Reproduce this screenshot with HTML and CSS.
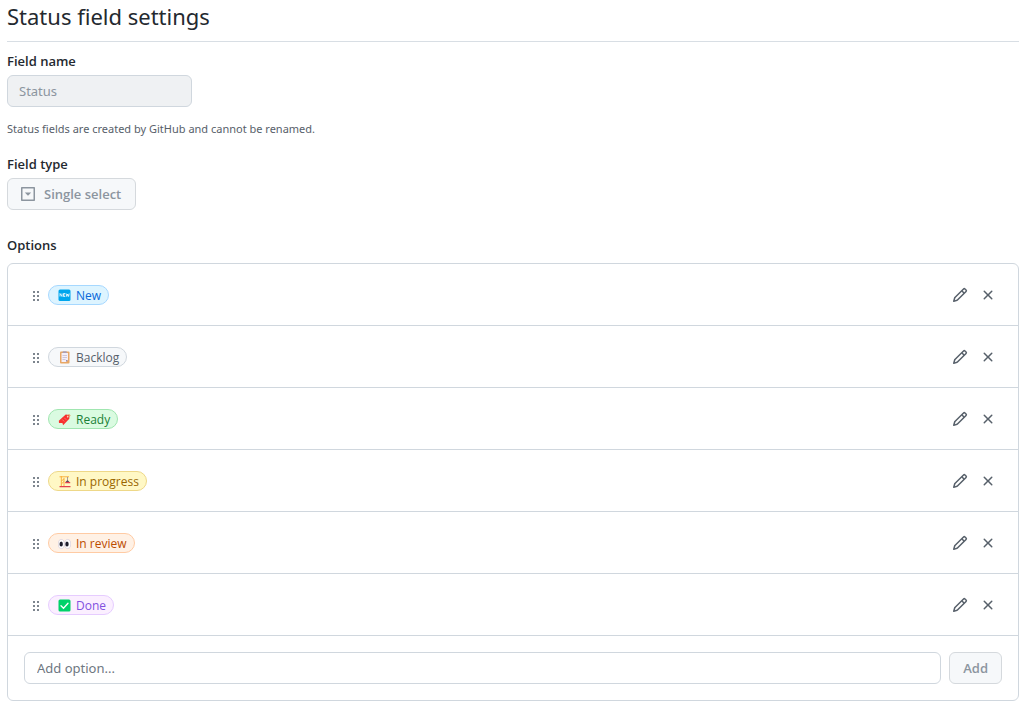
FILE: index.html
```html
<!DOCTYPE html>
<html lang="en">
<head>
<meta charset="utf-8">
<meta name="viewport" content="width=device-width, initial-scale=1">
<title>Status field settings</title>
<link rel="stylesheet" href="styles.css">
</head>
<body>
<svg class="defs" aria-hidden="true">
  <symbol id="pencil" viewBox="0 0 16 16"><path d="M11.013 1.427a1.75 1.75 0 0 1 2.474 0l1.086 1.086a1.75 1.75 0 0 1 0 2.474l-8.61 8.61c-.21.21-.47.364-.756.445l-3.251.93a.75.75 0 0 1-.927-.928l.929-3.25c.081-.286.235-.547.445-.758l8.61-8.61Zm.176 4.823L9.75 4.81l-6.286 6.287a.253.253 0 0 0-.064.108l-.558 1.953 1.953-.558a.253.253 0 0 0 .108-.064Zm1.238-3.763a.25.25 0 0 0-.354 0L10.811 3.75l1.439 1.44 1.263-1.263a.25.25 0 0 0 0-.354Z"/></symbol>
  <symbol id="cross" viewBox="0 0 16 16"><path d="M3.72 3.72a.75.75 0 0 1 1.06 0L8 6.94l3.22-3.22a.75.75 0 1 1 1.06 1.06L9.06 8l3.22 3.22a.75.75 0 1 1-1.06 1.06L8 9.06l-3.22 3.22a.75.75 0 0 1-1.06-1.06L6.94 8 3.72 4.78a.75.75 0 0 1 0-1.06Z"/></symbol>
  <symbol id="grip" viewBox="0 0 16 16"><path d="M5 4h2v2H5zM9 4h2v2H9zM5 8h2v2H5zM9 8h2v2H9zM5 12h2v2H5zM9 12h2v2H9z"/></symbol>
</svg>
<main class="page">
  <h1 class="title">Status field settings</h1>

  <section class="field">
    <label class="label" for="field-name">Field name</label>
    <input class="input name-input" id="field-name" type="text" value="Status" disabled>
    <p class="note">Status fields are created by GitHub and cannot be renamed.</p>
  </section>

  <section class="field type-field">
    <label class="label" for="field-type">Field type</label>
    <button class="button type-button" id="field-type" type="button" disabled>
      <svg class="icon" viewBox="0 0 16 16" aria-hidden="true"><path fill-rule="evenodd" d="M1.75 1h12.5c.42 0 .75.33.75.75v12.5c0 .42-.33.75-.75.75H1.750A.75.75 0 0 1 1 14.250V1.750C1 1.330 1.330 1 1.750 1ZM2.500 2.500v11h11v-11Z"/><path d="M4.800 6.500h6.400L8 9.700Z"/></svg>
      Single select
    </button>
  </section>

  <section>
    <h2 class="label" id="options-title">Options</h2>
    <div class="box">
      <ul class="options" aria-labelledby="options-title">
        <li class="option">
          <svg class="grip" aria-hidden="true"><use href="#grip"/></svg>
          <span class="tag blue"><svg class="emoji" viewBox="0 0 13 13" aria-hidden="true"><rect x=".5" y=".5" width="12" height="11.500" rx="1.500" fill="#00a6ed"/><path d="M2 7.500v-3l2 3v-3M7.300 4.500H5.500v3h1.800M5.500 6h1.600M8.200 4.500l.6 3 .9-2.500.9 2.500.6-3" fill="none" stroke="#fff" stroke-width=".8"/></svg>New</span>
          <button class="action" type="button" aria-label="Edit New"><svg class="icon"><use href="#pencil"/></svg></button>
          <button class="action" type="button" aria-label="Remove New"><svg class="icon"><use href="#cross"/></svg></button>
        </li>
        <li class="option">
          <svg class="grip" aria-hidden="true"><use href="#grip"/></svg>
          <span class="tag gray"><svg class="emoji" viewBox="0 0 13 13" aria-hidden="true"><rect x="2" y=".5" width="9.500" height="12" rx="1" fill="#e8a765"/><path d="M3.500 2h6.500v7L8 11H3.500Z" fill="#f3eef8"/><path d="M8 11V9h2Z" fill="#9b8fad"/><path d="M4.500 4.500h4.500M4.500 6.500h4.500M4.500 8.500h3" stroke="#c4bbd0" stroke-width=".8"/><path d="M4.700.3h4v1.700h-4Z" fill="#a99db5"/></svg>Backlog</span>
          <button class="action" type="button" aria-label="Edit Backlog"><svg class="icon"><use href="#pencil"/></svg></button>
          <button class="action" type="button" aria-label="Remove Backlog"><svg class="icon"><use href="#cross"/></svg></button>
        </li>
        <li class="option">
          <svg class="grip" aria-hidden="true"><use href="#grip"/></svg>
          <span class="tag green"><svg class="emoji" viewBox="0 0 13 13" aria-hidden="true"><path d="M.8 7.800 7.700 1.600l3.800.5-.2 3.600-6.200 6.600-.7-2.300L1 10Z" fill="#f8312f"/><path d="m4.300 6.500 2 2M6.300 4.800l2 2" stroke="#ff9a95" stroke-width=".6"/><circle cx="9.700" cy="3.700" r=".8" fill="#fff"/><path d="M9.500 3.400c.2-1.800 2-2.500 2.500-1.200.4 1-.8 1.800-1.500 1.300" fill="none" stroke="#e39d5b" stroke-width=".8"/></svg>Ready</span>
          <button class="action" type="button" aria-label="Edit Ready"><svg class="icon"><use href="#pencil"/></svg></button>
          <button class="action" type="button" aria-label="Remove Ready"><svg class="icon"><use href="#cross"/></svg></button>
        </li>
        <li class="option">
          <svg class="grip" aria-hidden="true"><use href="#grip"/></svg>
          <span class="tag yellow"><svg class="emoji" viewBox="0 0 13 13" aria-hidden="true"><path d="M3.300 11V1M6 11V3M1.500 1.800h9.500M3.300 6 6 4M3.300 9 6 6.500" fill="none" stroke="#f9b13c"/><path d="M9.500 2v3.500" stroke="#8a7486" stroke-width=".7"/><path d="m7.500 7 2-2 2 2Z" fill="#5a4358"/><path d="M7.200 7h5v1.200h-5ZM1.500 11h11v1.200h-11Z" fill="#e4404f"/></svg>In progress</span>
          <button class="action" type="button" aria-label="Edit In progress"><svg class="icon"><use href="#pencil"/></svg></button>
          <button class="action" type="button" aria-label="Remove In progress"><svg class="icon"><use href="#cross"/></svg></button>
        </li>
        <li class="option">
          <svg class="grip" aria-hidden="true"><use href="#grip"/></svg>
          <span class="tag orange"><svg class="emoji" viewBox="0 0 13 13" aria-hidden="true"><ellipse cx="3.300" cy="7" rx="3" ry="4.500" fill="#fff" stroke="#cdc4d6" stroke-width=".6"/><ellipse cx="9.700" cy="7" rx="3" ry="4.500" fill="#fff" stroke="#cdc4d6" stroke-width=".6"/><ellipse cx="3.200" cy="7" rx="1.700" ry="2.500" fill="#1c1c2b"/><ellipse cx="9" cy="7" rx="1.700" ry="2.500" fill="#1c1c2b"/></svg>In review</span>
          <button class="action" type="button" aria-label="Edit In review"><svg class="icon"><use href="#pencil"/></svg></button>
          <button class="action" type="button" aria-label="Remove In review"><svg class="icon"><use href="#cross"/></svg></button>
        </li>
        <li class="option">
          <svg class="grip" aria-hidden="true"><use href="#grip"/></svg>
          <span class="tag purple"><svg class="emoji" viewBox="0 0 13 13" aria-hidden="true"><rect x=".5" y=".5" width="12" height="12" rx="1.500" fill="#00d26a"/><path d="m3 6.700 2.500 2.500L10 4.300" fill="none" stroke="#fff" stroke-width="1.300" stroke-linecap="round"/></svg>Done</span>
          <button class="action" type="button" aria-label="Edit Done"><svg class="icon"><use href="#pencil"/></svg></button>
          <button class="action" type="button" aria-label="Remove Done"><svg class="icon"><use href="#cross"/></svg></button>
        </li>
      </ul>
      <form class="add-row">
        <input class="input add-input" type="text" placeholder="Add option..." aria-label="Add option">
        <button class="button" type="submit" disabled>Add</button>
      </form>
    </div>
  </section>
</main>
</body>
</html>
```
FILE: styles.css
```css
* {
  box-sizing: border-box;
}

body {
  margin: 0;
  background: #fff;
  color: #24292f;
  font-family: "Segoe UI", "Open Sans", "Noto Sans", sans-serif;
  font-size: 13px;
  line-height: 20px;
}

.defs {
  display: none;
}

.page {
  padding: 0 1px 7px 7px;
}

.title {
  margin: 0 0 9px;
  padding-bottom: 8px;
  border-bottom: 1px solid #d8dee4;
  font-family: "Segoe UI", "Noto Sans", sans-serif;
  font-size: 22px;
  font-weight: 400;
  line-height: 33px;
}

.field {
  display: flex;
  flex-direction: column;
  align-items: flex-start;
  margin-bottom: 15px;
}

.type-field {
  margin-bottom: 25px;
}

.label {
  display: block;
  margin: 0 0 4px;
  font-size: 13px;
  font-weight: 600;
  line-height: 20px;
}

.input {
  height: 32px;
  padding: 0 12px;
  border: 1px solid #d0d7de;
  border-radius: 6px;
  background: #fff;
  color: #24292f;
  font-family: "Segoe UI", "Noto Sans", sans-serif;
  font-size: 13px;
}

.input::placeholder {
  color: #6e7781;
  opacity: 1;
}

.name-input {
  width: 185px;
  padding: 0 11px;
}

.name-input:disabled {
  background: #eff1f3;
  color: #8c959f;
}

.note {
  margin: 12px 0 0;
  color: #57606a;
  font-family: "Segoe UI", "Noto Sans", sans-serif;
  font-size: 11px;
}

.button {
  display: inline-flex;
  align-items: center;
  gap: 8px;
  height: 32px;
  padding: 0 13px;
  border: 1px solid #d5d9dd;
  border-radius: 6px;
  background: #f6f8fa;
  color: #8c959f;
  font: inherit;
  font-weight: 600;
}

.type-button {
  padding: 0 14px 0 12px;
}

.icon {
  display: block;
  width: 16px;
  height: 16px;
  fill: currentColor;
}

.box {
  margin-top: 8px;
  border: 1px solid #d0d7de;
  border-radius: 6px;
}

.options {
  margin: 0;
  padding: 0;
  list-style: none;
}

.option {
  display: flex;
  align-items: center;
  height: 62px;
  padding: 0 16px 0 20px;
  border-bottom: 1px solid #d0d7de;
}

.grip {
  width: 16px;
  height: 16px;
  margin-right: 4px;
  fill: #7d858e;
}

.tag {
  display: inline-flex;
  align-items: center;
  gap: 5px;
  height: 20px;
  margin-right: auto;
  padding: 2px 7px 0 9px;
  border: 1px solid;
  border-radius: 10px;
  font-size: 12px;
  font-weight: 500;
  line-height: 18px;
}

.emoji {
  width: 13px;
  height: 13px;
}

.blue {
  background: #ddf4ff;
  border-color: #a6d8ff;
  color: #0969da;
}

.gray {
  background: #f6f8fa;
  border-color: #d0d7de;
  color: #57606a;
}

.green {
  background: #dafbe1;
  border-color: #a0e6b0;
  color: #1a7f37;
}

.yellow {
  background: #fff8c5;
  border-color: #eed888;
  color: #9a6700;
}

.orange {
  background: #fff1e5;
  border-color: #ffcba4;
  color: #bc4c00;
}

.purple {
  background: #fbefff;
  border-color: #e6ccff;
  color: #8250df;
}

.action {
  display: flex;
  align-items: center;
  justify-content: center;
  width: 28px;
  height: 28px;
  padding: 0;
  border: 0;
  border-radius: 6px;
  background: transparent;
  color: #57606a;
}

.add-row {
  display: flex;
  gap: 8px;
  padding: 16px;
}

.add-input {
  flex: 1;
  min-width: 0;
}
```
